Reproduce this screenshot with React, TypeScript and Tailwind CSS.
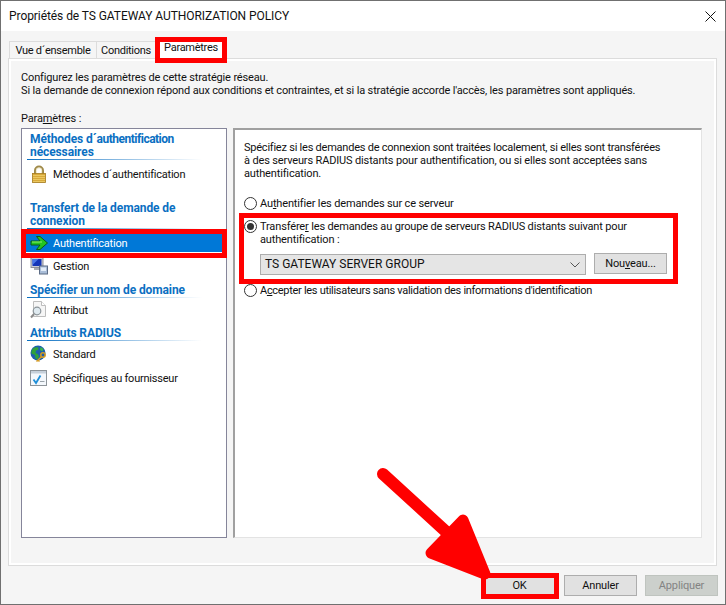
import React from "react";

function LockIcon() {
  return (
    <svg width="18" height="18" viewBox="0 0 18 18">
      <path d="M5 9V5.500a4 4 0 0 1 8 0V9" fill="none" stroke="#a08a4a" strokeWidth="2" />
      <path d="M6.300 9V5.500a2.700 2.700 0 0 1 5.400 0V9" fill="none" stroke="#e6dcae" strokeWidth="0.7" />
      <rect x="2.500" y="8.500" width="13" height="9" fill="#d8a93a" stroke="#a67c1e" strokeWidth="0.8" />
      <path d="M3 10.500h12M3 12.500h12M3 14.500h12M3 16.500h12" stroke="#f0d06a" strokeWidth="0.8" />
    </svg>
  );
}

function ArrowIcon() {
  return (
    <svg width="19" height="16" viewBox="0 0 19 16">
      <path d="M1 6h9L6.500 1.500h3.500L17.500 8 10 14.500H6.500L10 10H1z" fill="#22c422" stroke="#0a5a12" strokeWidth="1" />
      <path d="M2 7h10" stroke="#8cf06c" strokeWidth="1" />
    </svg>
  );
}

function ComputerIcon() {
  return (
    <svg width="18" height="18" viewBox="0 0 18 18">
      <rect x="1" y="0.500" width="12" height="10" fill="#c9ccd6" stroke="#8d8f99" />
      <rect x="2.500" y="2" width="9" height="7" fill="#1434b8" />
      <path d="M2.500 2h6l-6 6z" fill="#4a78e8" />
      <path d="M4 11h7l2 2H4z" fill="#a8abb5" />
      <rect x="9.500" y="9" width="8" height="8" fill="#a9bdd8" stroke="#5d6c85" />
      <rect x="11" y="10.500" width="5" height="3.500" fill="#e2ecf8" />
    </svg>
  );
}

function DocSearchIcon() {
  return (
    <svg width="16" height="18" viewBox="0 0 16 18">
      <path d="M3.500 0.500h8l4 4v11h-12z" fill="#f6f6f6" stroke="#bdbdbd" />
      <path d="M11.500 0.500v4h4" fill="#fff" stroke="#bdbdbd" />
      <circle cx="7" cy="10" r="3.800" fill="#dfeaf0" stroke="#8b9499" strokeWidth="1.200" />
      <path d="M4 13l-3 3.500" stroke="#8b8b8b" strokeWidth="2" />
    </svg>
  );
}

function GlobeKeyIcon() {
  return (
    <svg width="18" height="18" viewBox="0 0 18 18">
      <circle cx="8" cy="8" r="7.500" fill="#1d5fae" />
      <path d="M3 3.500c2-1.500 4-1.500 5.500-.8L8 5 6 5.500 5.500 8l2 1 1.500 2-1.500 3.500-2-1-.5-3.500L1.500 8.500C1 6.500 2 4.500 3 3.500z" fill="#2fa23a" />
      <path d="M10.500 2l3 2-1 2.500-2.500-1.500z" fill="#3cb54a" />
      <circle cx="13" cy="10" r="2.200" fill="none" stroke="#d89c22" strokeWidth="1.500" />
      <path d="M11.500 11.700L6.500 16.500M8 15l1.500 1.500" stroke="#d89c22" strokeWidth="1.500" />
    </svg>
  );
}

function WindowCheckIcon() {
  return (
    <svg width="17" height="16" viewBox="0 0 17 16">
      <rect x="0.500" y="0.500" width="16" height="15" fill="#f4f8fc" stroke="#8d9499" />
      <rect x="1" y="1" width="15" height="2.500" fill="#c6d0da" />
      <path d="M3.500 9.500L6 13l4.500-7.500" fill="none" stroke="#1f8fd8" strokeWidth="1.800" />
      <path d="M10 11.500h4.500" stroke="#9aa3aa" strokeWidth="1" />
    </svg>
  );
}

function SectionHeading({ children, className }: { children: React.ReactNode; className: string }) {
  return (
    <div className={className}>
      <div className="pt-px pr-2 pl-2 text-[12px] leading-[13px] font-bold tracking-[-0.1px] text-[#0a6fc2]">{children}</div>
      <div className="ml-[5px] h-px w-[175px] bg-linear-to-r from-[#0a6fc2] to-transparent" />
    </div>
  );
}

function NavItem({
  icon,
  label,
  className,
  active,
}: {
  icon: React.ReactNode;
  label: string;
  className: string;
  active?: boolean;
}) {
  return (
    <div className={`flex h-[18px] items-center tracking-[-0.22px] ${active ? "mx-1 bg-[#0078d7] pl-1 text-white" : "pl-2"} ${className}`}>
      <span className="flex w-[23px] shrink-0 items-center">{icon}</span>
      <span>{label}</span>
    </div>
  );
}

function Radio({ checked }: { checked?: boolean }) {
  return (
    <span className="mr-[3px] flex h-[13px] w-[13px] shrink-0 items-center justify-center rounded-full border border-[#333] bg-white">
      {checked && <span className="h-[7px] w-[7px] rounded-full bg-[#333]" />}
    </span>
  );
}

function DialogButton({ label, disabled }: { label: string; disabled?: boolean }) {
  return (
    <div
      className={`flex h-[21px] w-[73px] items-center justify-center border ${
        disabled ? "border-[#bfc4bf] bg-[#ccd0cc] text-[#838383]" : "border-[#adadad] bg-[#e1e1e1] text-[#111]"
      }`}
    >
      {label}
    </div>
  );
}

export default function App() {
  return (
    <div className="relative flex h-[605px] w-[726px] flex-col overflow-hidden border border-[#707070] bg-[#f5f5f5] font-['Roboto',sans-serif] text-[11px] leading-[13px] tracking-[-0.15px] text-[#111]">
      {/* Barre de titre */}
      <div className="flex h-[30px] items-center justify-between bg-white pr-[9px] pl-2">
        <span className="text-[12px] tracking-[-0.07px] text-[#111]">Propriétés de TS GATEWAY AUTHORIZATION POLICY</span>
        <svg width="11" height="11" viewBox="0 0 11 11">
          <path d="M0.500 0.500l10 10M10.500 0.500l-10 10" stroke="#111" strokeWidth="1" />
        </svg>
      </div>

      <div className="flex flex-1 flex-col px-[7px] pt-[10px]">
        {/* Onglets */}
        <div className="ml-px flex h-[17px] tracking-[-0.28px]">
          <div className="flex w-[87px] items-center justify-center border-t border-l border-[#dcdcdc]">Vue d´ensemble</div>
          <div className="flex w-[59px] items-center justify-center border-t border-l border-[#dcdcdc]">Conditions</div>
          <div className="-mt-1 flex h-[21px] w-[72px] items-center justify-center bg-white">Paramètres</div>
        </div>

        {/* Panneau */}
        <div className="mr-px h-[508px] border border-[#dcdcdc]">
          <div className="h-full border-2 border-white pt-[10px] pl-[10px]">
            <p>Configurez les paramètres de cette stratégie réseau.</p>
            <p>Si la demande de connexion répond aux conditions et contraintes, et si la stratégie accorde l'accès, les paramètres sont appliqués.</p>
            <p className="mt-[15px]">
              Para<span className="underline">m</span>ètres :
            </p>

            <div className="mt-[3px] flex h-[410px] gap-[6px]">
              {/* Liste de gauche */}
              <div className="w-[206px] border border-[#85859a] bg-white pt-[3px]">
                <SectionHeading className="">
                  Méthodes d´<span className="tracking-[-0.5px]">authentification</span>
                  <br />
                  nécessaires
                </SectionHeading>
                <NavItem className="mt-[5px]" icon={<LockIcon />} label="Méthodes d´authentification" />
                <SectionHeading className="mt-[18px]">
                  Transfert de la demande de
                  <br />
                  connexion
                </SectionHeading>
                <NavItem className="mt-[5px]" icon={<ArrowIcon />} label="Authentification" active />
                <NavItem className="mt-[5px]" icon={<ComputerIcon />} label="Gestion" />
                <SectionHeading className="mt-2">Spécifier un nom de domaine</SectionHeading>
                <NavItem className="mt-[3px]" icon={<DocSearchIcon />} label="Attribut" />
                <SectionHeading className="mt-[7px]">Attributs RADIUS</SectionHeading>
                <NavItem className="mt-1" icon={<GlobeKeyIcon />} label="Standard" />
                <NavItem className="mt-[6px]" icon={<WindowCheckIcon />} label="Spécifiques au fournisseur" />
              </div>

              {/* Détails */}
              <div className="w-[469px] border-t-2 border-r border-b border-l-2 border-t-[#a0a0a0] border-r-[#e3e3e3] border-b-[#e3e3e3] border-l-[#a0a0a0] bg-white pt-[11px] pl-[9px]">
                <p>
                  <span className="tracking-[-0.23px]">Spécifiez si les demandes de connexion sont traitées localement, si elles sont transférées</span>
                  <br />à des serveurs RADIUS distants pour authentification, ou si elles sont acceptées sans
                  <br />
                  authentification.
                </p>
                <div className="mt-[15px] flex h-4 items-center">
                  <Radio />
                  <span>
                    Au<span className="underline">t</span>hentifier les demandes sur ce serveur
                  </span>
                </div>
                <div className="mt-[9px] flex items-start">
                  <Radio checked />
                  <div>
                    <p>
                      Transfére<span className="underline">r</span> les demandes au groupe de serveurs RADIUS distants suivant pour
                      <br />
                      authentification :
                    </p>
                    <div className="mt-2 flex items-start gap-2">
                      <div className="flex h-[21px] w-[326px] items-center justify-between border border-[#adadad] bg-[#e5e5e5] pr-[5px] pl-1">
                        <span className="text-[12px] tracking-normal">TS GATEWAY SERVER GROUP</span>
                        <svg width="10" height="6" viewBox="0 0 10 6">
                          <path d="M0.500 0.500L5 5l4.500-4.500" fill="none" stroke="#555" strokeWidth="1" />
                        </svg>
                      </div>
                      <div className="-mt-px flex h-[21px] w-[73px] items-center justify-center border border-[#adadad] bg-[#e1e1e1]">
                        <span>
                          Nou<span className="underline">v</span>eau...
                        </span>
                      </div>
                    </div>
                  </div>
                </div>
                <div className="mt-[7px] flex h-4 items-center">
                  <Radio />
                  <span className="tracking-[-0.3px]">
                    A<span className="underline">c</span>cepter les utilisateurs sans validation des informations d'identification
                  </span>
                </div>
              </div>
            </div>
          </div>
        </div>

        {/* Boutons */}
        <div className="mt-[9px] flex justify-end gap-2">
          <DialogButton label="OK" />
          <DialogButton label="Annuler" />
          <DialogButton label="Appliquer" disabled />
        </div>
      </div>

      {/* Annotations rouges par-dessus la capture */}
      <div className="absolute top-[36px] left-[154px] h-[26px] w-[72px] border-[5px] border-[#f00]" />
      <div className="absolute top-[228px] left-[20px] h-[29px] w-[206px] border-[5px] border-[#f00]" />
      <div className="absolute top-[212px] left-[238px] h-[71px] w-[439px] border-[5px] border-[#f00]" />
      <div className="absolute top-[572px] left-[480px] h-[26px] w-[78px] border-[5px] border-[#f00]" />
      <svg className="absolute top-0 left-0" width="726" height="605" viewBox="0 0 726 605">
        <path d="M382 473L452 537" stroke="#f00" strokeWidth="12" strokeLinecap="round" fill="none" />
        <path d="M462 519L430 552L484 573Z" fill="#f00" stroke="#f00" strokeWidth="11" strokeLinejoin="round" />
      </svg>
    </div>
  );
}
